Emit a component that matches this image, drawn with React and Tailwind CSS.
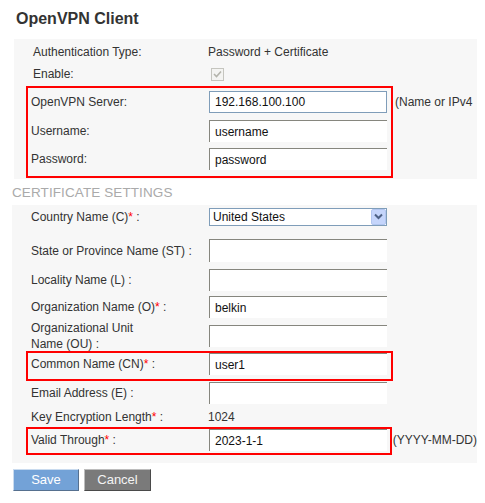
const inputBase = 'w-[178px] h-[22px] bg-white pl-[5px] flex items-center text-[12px] text-[#111]'

function Field({ value = '', focus = false }) {
  return (
    <div
      className={
        inputBase +
        (focus ? ' border border-[#7f9db9] pl-[4px]' : ' border-t border-l border-[#86867e]')
      }
    >
      {value}
    </div>
  )
}

function Star() {
  return <span className="text-[#f00]">*</span>
}

function Row({ label, children, labelW = 'w-[178px]', h = 'h-[22px]', className = '' }) {
  return (
    <div className={`flex items-center ${h} ${className}`}>
      <div className={`${labelW} shrink-0 leading-[16px]`}>{label}</div>
      {children}
    </div>
  )
}

function Select() {
  return (
    <div className="w-[178px] h-[18px] bg-white border border-[#7f9db9] flex items-center justify-between pl-[3px] text-[12px] text-[#111]">
      <span>United States</span>
      <div className="w-[15px] h-[16px] bg-[#c5d5fb] border border-[#b2c6f0] rounded-[2px] flex items-center justify-center">
        <svg width="9" height="7" viewBox="0 0 9 7">
          <path d="M1 1.5 L4.5 5 L8 1.5" fill="none" stroke="#4d6185" strokeWidth="2" />
        </svg>
      </div>
    </div>
  )
}

function Checkbox() {
  return (
    <div className="ml-[3px] w-[13px] h-[13px] border border-[#c5c5bf] bg-[#f4f4f2] flex items-center justify-center">
      <svg width="9" height="8" viewBox="0 0 9 8">
        <path d="M1 4 L3.5 6.5 L8 1.5" fill="none" stroke="#b4b4ac" strokeWidth="1.6" />
      </svg>
    </div>
  )
}

export default function App() {
  return (
    <div className="w-[485px] h-[503px] bg-white font-['Liberation_Sans',Arial,sans-serif] text-[12px] text-[#333]">
      <div className="pt-[9px] pl-[16px] h-[39px]">
        <h1 className="text-[16px] leading-[20px] font-bold text-[#333]">OpenVPN Client</h1>
      </div>

      {/* general settings */}
      <div className="ml-[14px] w-[463px] bg-[#f7f7f7] pt-[2px] pb-[1px]">
        <Row label="Authentication Type:" labelW="w-[175px]" className="pl-[19px]">
          <span>Password + Certificate</span>
        </Row>
        <Row label="Enable:" labelW="w-[175px]" className="pl-[19px]">
          <Checkbox />
        </Row>
        <div className="flex mt-[1px]">
          <div className="ml-[12px] w-[367px] border-2 border-[#f00] pl-[3px] pt-[3px] pb-[6px]">
            <Row label="OpenVPN Server:">
              <Field value="192.168.100.100" focus />
            </Row>
            <Row label="Username:" className="mt-[7px]">
              <Field value="username" />
            </Row>
            <Row label="Password:" className="mt-[6px]">
              <Field value="password" />
            </Row>
          </div>
          <div className="ml-[2px] pt-[5px]">
            <div className="h-[22px] flex items-center whitespace-nowrap">(Name or IPv4</div>
          </div>
        </div>
      </div>

      <div className="h-[26px] pt-[3px] pl-[12px] flex items-center text-[13.5px] text-[#aaa] tracking-[0.1px]">
        CERTIFICATE SETTINGS
      </div>

      {/* certificate settings */}
      <div className="ml-[12px] w-[465px] bg-[#f7f7f7] pb-[8px]">
        <Row label={<>Country Name (C)<Star /> :</>} h="h-[23px]" className="pl-[19px]">
          <Select />
        </Row>
        <Row label="State or Province Name (ST) :" h="h-[23px]" className="pl-[19px] mt-[11px]">
          <div className="w-[178px] h-[23px] bg-white border-t border-l border-[#86867e]" />
        </Row>
        <Row label="Locality Name (L) :" className="pl-[19px] mt-[7px]">
          <Field />
        </Row>
        <Row label={<>Organization Name (O)<Star /> :</>} className="pl-[19px] mt-[5px]">
          <Field value="belkin" />
        </Row>
        <Row
          label={<>Organizational Unit<br />Name (OU) :</>}
          className="pl-[19px] mt-[7px]"
        >
          <Field />
        </Row>
        <div className="ml-[14px] w-[367px] border-2 border-[#f00] pl-[3px] pb-[4px] mt-[4px]">
          <Row label={<>Common Name (CN)<Star /> :</>}>
            <Field value="user1" />
          </Row>
        </div>
        <Row label="Email Address (E) :" className="pl-[19px] mt-[1px]">
          <Field />
        </Row>
        <Row label={<>Key Encryption Length<Star /> :</>} h="h-[20px]" className="pl-[19px] mt-[3px]">
          <span className="-ml-[1px]">1024</span>
        </Row>
        <div className="flex">
          <div className="ml-[14px] w-[366px] border-2 border-[#f00] pl-[3px] pb-[2px]">
            <Row label={<>Valid Through<Star /> :</>}>
              <Field value="2023-1-1" />
            </Row>
          </div>
          <div className="ml-[1px] pt-[2px]">
            <div className="h-[22px] flex items-center whitespace-nowrap">(YYYY-MM-DD)</div>
          </div>
        </div>
      </div>

      <div className="flex gap-[5px] ml-[13px] mt-[6px]">
        <button className="w-[66px] h-[22px] bg-[#73a2d7] border-t border-l border-[#c9dbef] border-b border-r border-b-[#56708f] border-r-[#56708f] text-white text-[13px]">
          Save
        </button>
        <button className="w-[67px] h-[22px] bg-[#7a7a7a] border-t border-l border-[#bdbdbd] border-b border-r border-b-[#4a4a4a] border-r-[#4a4a4a] text-[#f4f4f4] text-[13px]">
          Cancel
        </button>
      </div>
    </div>
  )
}
